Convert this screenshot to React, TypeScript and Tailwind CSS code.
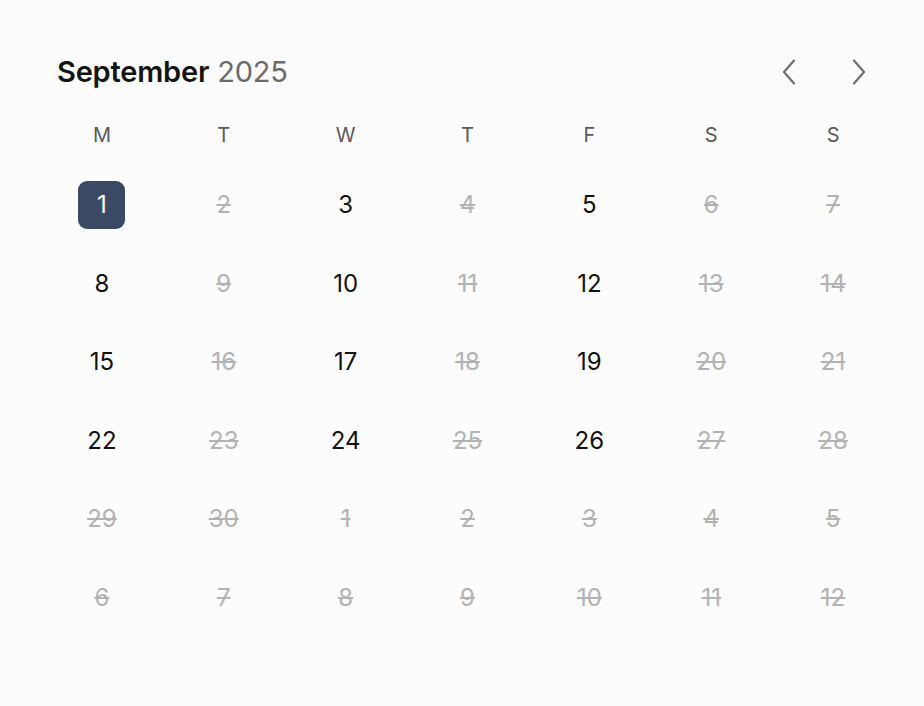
const weekdays = ["M", "T", "W", "T", "F", "S", "S"]

type Day = { n: number; off: boolean; selected?: boolean }

// September 2025 starts on a Monday; only Mon/Wed/Fri of the first four weeks are open
const days: Day[] = []
for (let i = 0; i < 42; i++) {
  if (i < 30) {
    const col = i % 7
    const open = i < 28 && (col === 0 || col === 2 || col === 4)
    days.push({ n: i + 1, off: !open, selected: i === 0 })
  } else {
    days.push({ n: i - 29, off: true })
  }
}

function Chevron({ dir }: { dir: "left" | "right" }) {
  return (
    <svg width="14" height="26" viewBox="0 0 14 26" fill="none">
      <path
        d={dir === "left" ? "M12 1.5 L2 13 L12 24.5" : "M2 1.5 L12 13 L2 24.5"}
        stroke="#707070"
        strokeWidth="2.2"
        strokeLinecap="round"
        strokeLinejoin="round"
      />
    </svg>
  )
}

export default function App() {
  return (
    <div className="min-h-[706px] w-[924px] bg-[#fcfcfc] font-['Inter',sans-serif] pt-[52px]">
      <div className="flex items-center justify-between pl-[57px] pr-[58px]">
        <h1 className="text-[29px] leading-[40px] tracking-[-0.2px]">
          <span className="font-semibold text-[#141414]">September</span>{" "}
          <span className="text-[#6b6b6b]">2025</span>
        </h1>
        <div className="flex items-center gap-[56px]">
          <button className="flex h-[30px] w-[14px] items-center justify-center">
            <Chevron dir="left" />
          </button>
          <button className="flex h-[30px] w-[14px] items-center justify-center">
            <Chevron dir="right" />
          </button>
        </div>
      </div>

      <div className="ml-[41px] mt-[31px] grid w-[853px] grid-cols-7">
        {weekdays.map((d, i) => (
          <div key={i} className="flex h-[24px] items-center justify-center text-[20px] text-[#5a5a5a]">
            {d}
          </div>
        ))}
      </div>

      <div className="ml-[41px] mt-[34px] grid w-[853px] grid-cols-7 gap-y-[30.5px]">
        {days.map((d, i) => (
          <div key={i} className="flex h-[48px] items-center justify-center">
            {d.selected ? (
              <span className="flex h-[48px] w-[47px] items-center justify-center rounded-[9px] bg-[#3a4a64] text-[24px] text-white">
                {d.n}
              </span>
            ) : d.off ? (
              <span className="text-[24px] text-[#b3b3b3] line-through decoration-[2px]">{d.n}</span>
            ) : (
              <span className="text-[24px] text-[#111111]">{d.n}</span>
            )}
          </div>
        ))}
      </div>
    </div>
  )
}
